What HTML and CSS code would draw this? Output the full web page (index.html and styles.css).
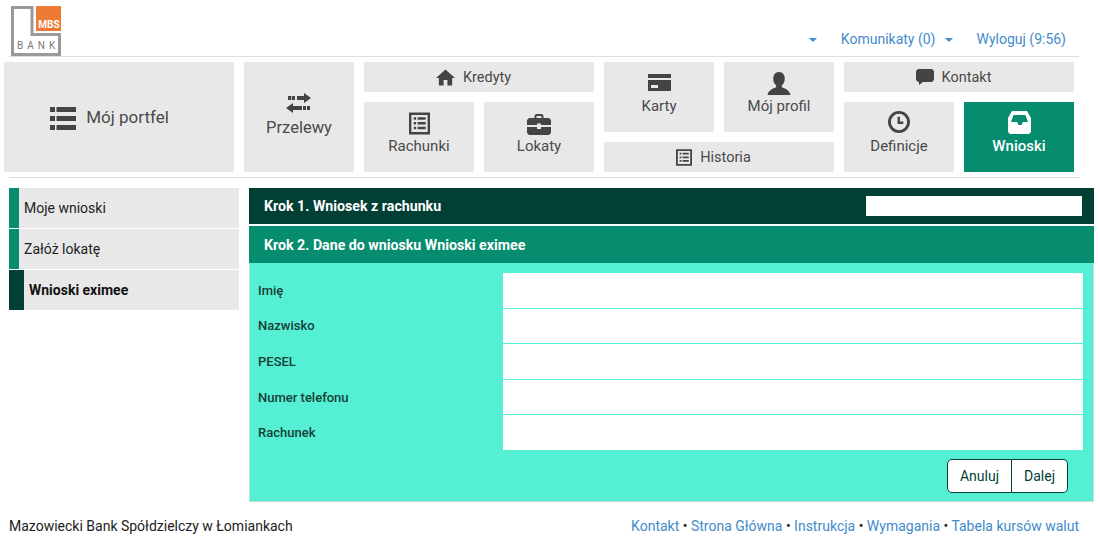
FILE: index.html
```html
<!DOCTYPE html>
<html lang="pl">
<head>
    <meta charset="UTF-8">
    <meta name="viewport" content="width=device-width, initial-scale=1.0">
    <title>Mazowiecki Bank Spółdzielczy</title>
    <link rel="stylesheet" href="styles.css">
</head>
<body>
    <header class="top">
        <svg class="logo" width="50" height="50" viewBox="0 0 50 50">
            <path fill-rule="evenodd" d="M0 0H22.500V27H50V50H0ZM3 3V47H47V30H19.500V3Z" fill="#9a9a9a"/>
            <rect x="25" y="0" width="25" height="25" fill="#ee7a34"/>
            <text x="38" y="22" class="logo-mbs">MBS</text>
            <text x="6" y="43" class="logo-bank">BANK</text>
        </svg>
        <div class="top-links">
            <a href="#" class="caret-only"><span class="caret"></span></a>
            <a href="#">Komunikaty (0)<span class="caret"></span></a>
            <a href="#">Wyloguj (9:56)</a>
        </div>
    </header>

    <nav class="tiles">
        <a href="#" class="tile tile-wide tile-row t-portfel">
            <svg width="26" height="23" viewBox="0 0 26 23"><path d="M0 0h5v5H0zM6.500 0H26v5H6.500zM0 9h5v5H0zM6.500 9H26v5H6.500zM0 18h5v5H0zM6.500 18H26v5H6.500z"/></svg>
            Mój portfel
        </a>
        <a href="#" class="tile t-przelewy">
            <svg width="26" height="20" viewBox="0 0 26 20"><path d="M2 3h3.300v4H2zM6 3h3v4H6zM11 3h7V0l7 5-7 5V7h-7zM0 15l7-5v3h9v4H7v3zM17 13h3v4h-3zM21 13h3v4h-3z"/></svg>
            Przelewy
        </a>
        <a href="#" class="tile tile-row t-kredyty">
            <svg width="19" height="17" viewBox="0 0 20 17"><path d="M10 0 20 9h-3v8h-5v-6H8v6H3V9H0z"/></svg>
            Kredyty
        </a>
        <a href="#" class="tile t-rachunki">
            <svg width="21" height="23" viewBox="0 0 22 23"><path fill-rule="evenodd" d="M0 0h22v23H0zM2.500 2.500v18h17v-18z"/><path d="M5 5h2.500v2.500H5zM9 5h8.500v2.500H9zM5 10h2.500v2.500H5zM9 10h8.500v2.500H9zM5 15h2.500v2.500H5zM9 15h8.500v2.500H9z"/></svg>
            Rachunki
        </a>
        <a href="#" class="tile t-lokaty">
            <svg width="24" height="21" viewBox="0 0 24 21"><path fill-rule="evenodd" d="M7.500 4V1.500L9 0h6l1.500 1.500V4H22l2 2v5H14V9.500h-4V11H0V6l2-2zM9.500 2v2h5V2z"/><path d="M0 13h10v2h4v-2h10v6l-2 2H2l-2-2z"/></svg>
            Lokaty
        </a>
        <a href="#" class="tile t-karty">
            <svg width="23" height="17" viewBox="0 0 23 17"><path fill-rule="evenodd" d="M0 0h23v4H0zM0 6h23v11H0zM3 11v3h7v-3z"/></svg>
            Karty
        </a>
        <a href="#" class="tile t-profil">
            <svg width="24" height="23" viewBox="0 0 24 24"><path d="M12 0c4 0 6 3 6 7 0 3-1 5-3 7v2c3 1 8 3 9 8H0c1-5 6-7 9-8v-2C7 12 6 10 6 7c0-4 2-7 6-7z"/></svg>
            Mój profil
        </a>
        <a href="#" class="tile tile-row t-historia">
            <svg width="16" height="17" viewBox="0 0 22 23"><path fill-rule="evenodd" d="M0 0h22v23H0zM2.500 2.500v18h17v-18z"/><path d="M5 5h2.500v2.500H5zM9 5h8.500v2.500H9zM5 10h2.500v2.500H5zM9 10h8.500v2.500H9zM5 15h2.500v2.500H5zM9 15h8.500v2.500H9z"/></svg>
            Historia
        </a>
        <a href="#" class="tile tile-row t-kontakt">
            <svg width="18" height="16" viewBox="0 0 18 16"><path d="M2 0h14l2 2v9l-2 2H7l-4 3v-3H2l-2-2V2z"/></svg>
            Kontakt
        </a>
        <a href="#" class="tile t-definicje">
            <svg width="22" height="22" viewBox="0 0 23 23"><path fill-rule="evenodd" d="M11.500 0a11.500 11.500 0 1 0 0 23 11.500 11.500 0 0 0 0-23zM11.500 3a8.500 8.500 0 1 1 0 17 8.500 8.500 0 0 1 0-17z"/><path d="M10 6h2.500v5H16v2.500h-6z"/></svg>
            Definicje
        </a>
        <a href="#" class="tile tile-on t-wnioski">
            <svg width="23" height="23" viewBox="0 0 23 23"><path fill-rule="evenodd" d="M4 0h15l4 7v14l-2 2H2l-2-2V7zM5.500 4h12l2.500 7h-5l-1.500 3h-3L9 11H3z"/></svg>
            Wnioski
        </a>
    </nav>

    <main class="content">
        <aside class="side">
            <a href="#" class="side-item">Moje wnioski</a>
            <a href="#" class="side-item">Załóż lokatę</a>
            <a href="#" class="side-item side-on">Wnioski eximee</a>
        </aside>
        <section class="steps">
            <div class="step step-one">
                <span>Krok 1. Wniosek z rachunku</span>
                <input type="text" class="step-input">
            </div>
            <div class="step step-two">Krok 2. Dane do wniosku Wnioski eximee</div>
            <form class="form">
                <div class="form-rows">
                    <label class="row">Imię<input type="text"></label>
                    <label class="row">Nazwisko<input type="text"></label>
                    <label class="row">PESEL<input type="text"></label>
                    <label class="row">Numer telefonu<input type="text"></label>
                    <label class="row">Rachunek<input type="text"></label>
                </div>
                <div class="btns">
                    <button type="button">Anuluj</button><button type="button">Dalej</button>
                </div>
            </form>
        </section>
    </main>

    <footer class="foot">
        <span class="foot-name">Mazowiecki Bank Spółdzielczy w Łomiankach</span>
        <span class="foot-links">
            <a href="#">Kontakt</a> • <a href="#">Strona Główna</a> • <a href="#">Instrukcja</a> • <a href="#">Wymagania</a> • <a href="#">Tabela kursów walut</a>
        </span>
    </footer>
</body>
</html>
```

FILE: styles.css
```css
* {
    box-sizing: border-box;
}

body {
    font-family: Roboto, 'Liberation Sans', sans-serif;
    font-size: 14px;
    background-color: #fff;
    color: #222;
    margin: 0;
    padding: 0;
    width: 1100px;
    height: 545px;
    overflow: hidden;
}

a {
    text-decoration: none;
}

.top {
    height: 57px;
    margin: 0 21px 0 9px;
    padding: 6px 0 0 2px;
    border-bottom: 1px solid #ddd;
    display: flex;
    justify-content: space-between;
}

.logo-mbs {
    font-size: 10px;
    font-weight: 700;
    fill: #fff;
    text-anchor: middle;
}

.logo-bank {
    font-size: 10px;
    letter-spacing: 4px;
    fill: #777;
}

.top-links {
    display: flex;
    align-items: flex-start;
    gap: 24px;
    padding: 20px 13px 0 0;
}

.top-links a {
    color: #428bca;
    font-size: 14px;
    line-height: 26px;
}

.caret {
    display: inline-block;
    width: 0;
    height: 0;
    margin-left: 9px;
    vertical-align: middle;
    border-top: 4px solid #428bca;
    border-left: 4px solid transparent;
    border-right: 4px solid transparent;
}

.caret-only .caret {
    margin-left: 0;
}

.tiles {
    display: grid;
    grid-template-columns: repeat(9, 110px);
    grid-template-rows: repeat(3, 30px);
    gap: 10px;
    padding: 5px 0 0 4px;
}

.tile {
    background-color: #e8e8e8;
    color: #4a4a4a;
    font-size: 15px;
    line-height: 18px;
    display: flex;
    flex-direction: column;
    align-items: center;
    justify-content: flex-end;
    gap: 2px;
    padding-bottom: 17px;
}

.tile svg {
    fill: #444;
}

.tile-row {
    flex-direction: row;
    justify-content: center;
    gap: 8px;
    font-size: 14.500px;
    padding: 2px 11px 0 0;
}

.tile-row svg {
    margin-top: -2px;
}

.tile-wide {
    font-size: 17px;
    gap: 10px;
    padding: 0 19px 0 0;
}

.tile-wide svg {
    margin-top: 3px;
}

.tile-on {
    background-color: #068c6f;
    color: #fff;
    font-weight: 500;
}

.tile-on svg {
    fill: #fff;
}

.t-portfel { grid-column: 1 / 3; grid-row: 1 / 4; }
.t-przelewy { grid-column: 3; grid-row: 1 / 4; font-size: 16.500px; line-height: 20px; gap: 5px; padding-bottom: 34px; }
.t-kredyty { grid-column: 4 / 6; grid-row: 1; }
.t-rachunki { grid-column: 4; grid-row: 2 / 4; }
.t-lokaty { grid-column: 5; grid-row: 2 / 4; }
.t-karty { grid-column: 6; grid-row: 1 / 3; gap: 6px; }
.t-profil { grid-column: 7; grid-row: 1 / 3; }
.t-historia { grid-column: 6 / 8; grid-row: 3; }
.t-kontakt { grid-column: 8 / 10; grid-row: 1; }
.t-definicje { grid-column: 8; grid-row: 2 / 4; gap: 4px; }
.t-wnioski { grid-column: 9; grid-row: 2 / 4; gap: 3px; }

.content {
    margin: 5px 21px 0 9px;
    padding-top: 10px;
    border-top: 1px solid #ddd;
    display: flex;
    gap: 10px;
    width: 1085px;
    border-image: linear-gradient(to right, #ddd 1070px, transparent 1070px) 1;
}

.side {
    width: 230px;
    display: flex;
    flex-direction: column;
    gap: 1px;
}

.side-item {
    height: 40px;
    line-height: 40px;
    background-color: #e8e8e8;
    border-left: 10px solid #068c6f;
    padding-left: 5px;
    color: #222;
    font-size: 14px;
}

.side-on {
    border-left: 15px solid #023f35;
    font-weight: 700;
    color: #111;
}

.steps {
    width: 845px;
}

.step {
    color: #fff;
    font-weight: 700;
    font-size: 14.200px;
    padding-left: 15px;
    display: flex;
    align-items: center;
    justify-content: space-between;
}

.step-one {
    height: 36px;
    background-color: #023f35;
    padding-right: 12px;
    margin-bottom: 2px;
}

.step-input {
    width: 216px;
    height: 20px;
    border: 0;
    padding: 0;
    background-color: #fff;
}

.step-two {
    height: 37px;
    background-color: #068c6f;
}

.form {
    background-color: #55f0d4;
    border: 1px solid #c4ddd6;
    border-top: 0;
    padding: 10px 10px 8px 8px;
    height: 239px;
}

.form-rows {
    display: flex;
    flex-direction: column;
    gap: 1px;
}

.row {
    height: 34.600px;
    display: flex;
    justify-content: space-between;
    align-items: center;
    font-size: 13px;
    font-weight: 500;
    color: #173f37;
}

.row input {
    width: 580px;
    height: 100%;
    border: 0;
    padding: 0;
    background-color: #fff;
}

.btns {
    display: flex;
    justify-content: flex-end;
    margin: 9px 15px 0 0;
}

.btns button {
    height: 34px;
    padding: 0 12px;
    font-family: inherit;
    font-size: 14px;
    color: #023f35;
    background-color: #fff;
    border: 1px solid #023f35;
    border-radius: 5px 0 0 5px;
}

.btns button + button {
    border-left: 0;
    border-radius: 0 5px 5px 0;
}

.foot {
    display: flex;
    justify-content: space-between;
    align-items: center;
    margin: 16px 21px 0 9px;
    font-size: 14px;
    color: #222;
}

.foot-links a {
    color: #428bca;
}
```
